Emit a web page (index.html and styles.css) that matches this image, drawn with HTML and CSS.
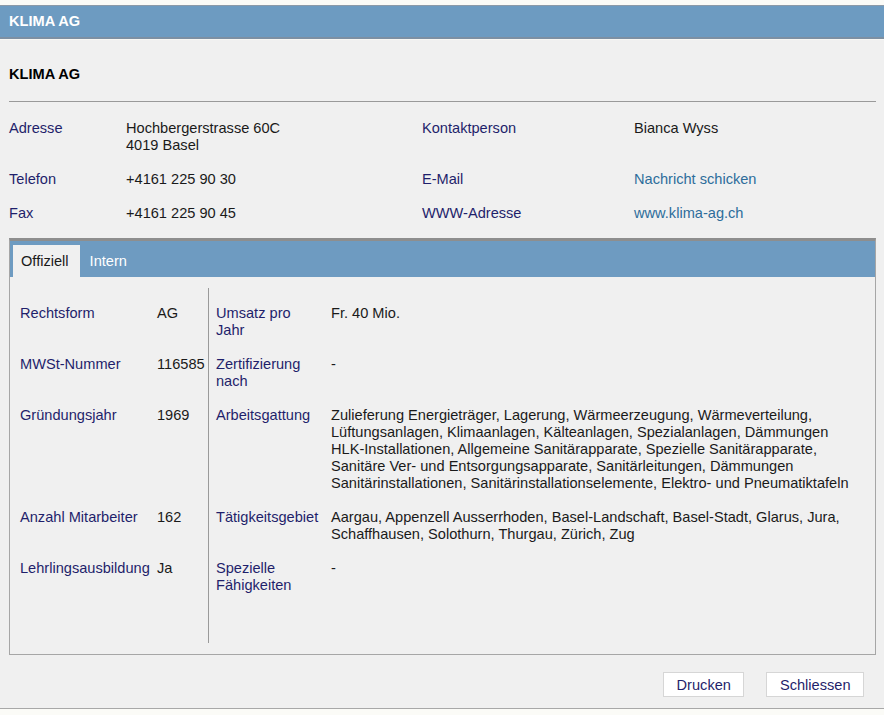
FILE: index.html
```html
<!DOCTYPE html>
<html lang="de">
<head>
<meta charset="utf-8">
<title>KLIMA AG</title>
<link rel="stylesheet" href="styles.css">
</head>
<body>
<div class="dialog">
  <div class="titlebar">KLIMA AG</div>
  <div class="content">
    <h1 class="name">KLIMA AG</h1>
    <hr class="rule">
    <div class="info">
      <div class="lbl">Adresse</div>
      <div class="val">Hochbergerstrasse 60C<br>4019 Basel</div>
      <div class="lbl">Kontaktperson</div>
      <div class="val">Bianca Wyss</div>
      <div class="lbl">Telefon</div>
      <div class="val">+4161 225 90 30</div>
      <div class="lbl">E-Mail</div>
      <div class="val"><a class="link" href="#">Nachricht schicken</a></div>
      <div class="lbl">Fax</div>
      <div class="val">+4161 225 90 45</div>
      <div class="lbl">WWW-Adresse</div>
      <div class="val"><a class="link" href="#">www.klima-ag.ch</a></div>
    </div>
    <div class="panel">
      <div class="tabbar">
        <div class="tab active">Offiziell</div>
        <div class="tab">Intern</div>
      </div>
      <div class="tabbody">
        <div class="facts">
          <div class="c1 lbl">Rechtsform</div>
          <div class="c2">AG</div>
          <div class="c3 lbl"><span class="c3in">Umsatz pro Jahr</span></div>
          <div class="c4">Fr. 40 Mio.</div>

          <div class="c1 lbl">MWSt-Nummer</div>
          <div class="c2">116585</div>
          <div class="c3 lbl"><span class="c3in">Zertifizierung nach</span></div>
          <div class="c4">-</div>

          <div class="c1 lbl">Gründungsjahr</div>
          <div class="c2">1969</div>
          <div class="c3 lbl"><span class="c3in">Arbeitsgattung</span></div>
          <div class="c4">Zulieferung Energieträger, Lagerung, Wärmeerzeugung, Wärmeverteilung,<br>Lüftungsanlagen, Klimaanlagen, Kälteanlagen, Spezialanlagen, Dämmungen<br>HLK-Installationen, Allgemeine Sanitärapparate, Spezielle Sanitärapparate,<br>Sanitäre Ver- und Entsorgungsapparate, Sanitärleitungen, Dämmungen<br>Sanitärinstallationen, Sanitärinstallationselemente, Elektro- und Pneumatiktafeln</div>

          <div class="c1 lbl">Anzahl Mitarbeiter</div>
          <div class="c2">162</div>
          <div class="c3 lbl"><span class="c3in">Tätigkeitsgebiet</span></div>
          <div class="c4">Aargau, Appenzell Ausserrhoden, Basel-Landschaft, Basel-Stadt, Glarus, Jura, Schaffhausen, Solothurn, Thurgau, Zürich, Zug</div>

          <div class="c1 lbl">Lehrlingsausbildung</div>
          <div class="c2">Ja</div>
          <div class="c3 lbl"><span class="c3in">Spezielle Fähigkeiten</span></div>
          <div class="c4">-</div>
        </div>
      </div>
    </div>
  </div>
  <div class="footer">
    <button class="btn" type="button">Drucken</button>
    <button class="btn" type="button">Schliessen</button>
  </div>
</div>
</body>
</html>
```
FILE: styles.css
```css
html, body {
  margin: 0;
  padding: 0;
}
body {
  background: #fbfbf7;
  font-family: "Liberation Sans", Arial, sans-serif;
  font-size: 14.6px;
  line-height: 17px;
  color: #1a1a1a;
}
.dialog {
  padding-top: 5px;
}
.titlebar {
  height: 31px;
  line-height: 31px;
  border-top: 1px solid #8c9aa8;
  border-bottom: 2px solid #7d90a3;
  background: #6d9bc1;
  color: #ffffff;
  font-weight: bold;
  padding-left: 9px;
}
.content {
  background: #f0f0f0;
  border-top: 1px solid #f7f7f4;
  padding: 26px 8px 0 9px;
}
.name {
  margin: 0;
  font-size: 14.6px;
  line-height: 17px;
  font-weight: bold;
  color: #000;
}
.rule {
  margin: 18px 0 0 0;
  border: 0;
  height: 1px;
  background: #9a9a9a;
}
.info {
  margin-top: 18px;
  display: grid;
  grid-template-columns: 117px 296px 212px 1fr;
  row-gap: 17px;
}
.lbl {
  color: #1f1f6b;
}
.link {
  color: #2d6d9b;
  text-decoration: none;
}
.panel {
  margin-top: 16px;
  border: 1px solid #a6a6a6;
  border-top: 3px solid #8e8e8e;
}
.tabbar {
  display: flex;
  background: #6e9bc1;
  height: 32px;
  padding: 4px 0 0 3px;
}
.tab {
  height: 32px;
  line-height: 32px;
  padding: 0 7px 0 10px;
  color: #ffffff;
}
.tab.active {
  background: #f0f0f0;
  color: #1a1a1a;
  padding: 0 11px 0 8px;
}
.tabbody {
  padding: 11px 20px 11px 10px;
}
.facts {
  display: grid;
  grid-template-columns: 137px 51px 123px 1fr;
  grid-template-rows: auto auto auto auto 1fr;
  height: 355px;
}
.facts > div {
  padding-top: 17px;
}
.c3 {
  border-left: 1px solid #9a9a9a;
  padding-left: 7px;
}
.c3in {
  display: block;
  width: 104px;
}
.footer {
  background: #f0f0f0;
  display: flex;
  justify-content: flex-end;
  gap: 22px;
  padding: 17px 20px 11px 0;
  border-bottom: 1px solid #a8a8a8;
}
.btn {
  height: 25px;
  padding: 0 12.5px;
  background: #ffffff;
  border: 1px solid #d6d6d6;
  font-family: "Liberation Sans", Arial, sans-serif;
  font-size: 14.6px;
  color: #1f1f6b;
  cursor: pointer;
}
```
